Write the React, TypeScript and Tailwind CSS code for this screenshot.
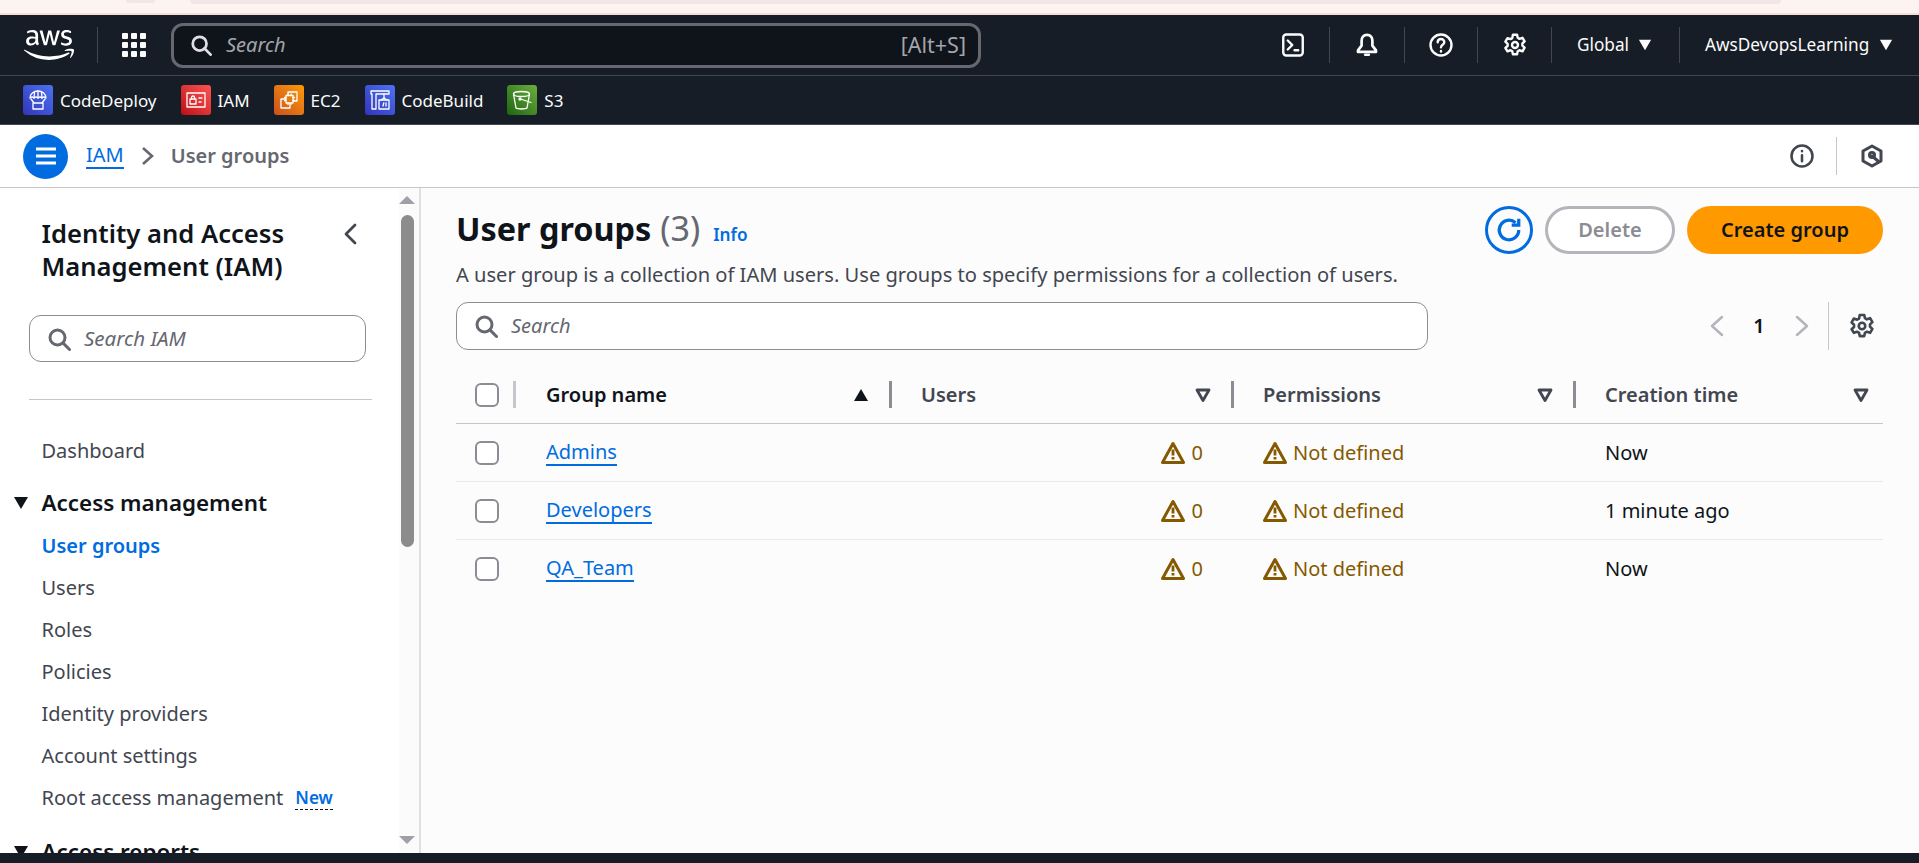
import React from "react";
import { FaAws } from "react-icons/fa";

const FONT = "font-['Noto_Sans','Open_Sans',sans-serif]";

function Icon({ size = 24, className = "", sw = 2, vb = 16, children }: { size?: number; className?: string; sw?: number; vb?: number; children: React.ReactNode }) {
  return (
    <svg width={size} height={size} viewBox={`0 0 ${vb} ${vb}`} fill="none" stroke="currentColor" strokeWidth={sw} strokeLinecap="round" strokeLinejoin="round" className={`shrink-0 ${className}`}>
      {children}
    </svg>
  );
}

const SearchIcon = ({ size = 24, className = "" }: { size?: number; className?: string }) => (
  <Icon size={size} className={className}>
    <circle cx="7" cy="7" r="5" />
    <path d="M10.6 10.6 15 15" />
  </Icon>
);

const GearIcon = ({ size = 24, className = "" }: { size?: number; className?: string }) => (
  <Icon size={size} className={className} sw={1.6}>
    <circle cx="8" cy="8" r="2" />
    <path d="M6.6 1.2h2.8l.4 2 1.2.7 2-.7 1.4 2.4-1.5 1.4v1.4l1.5 1.4-1.4 2.4-2-.7-1.2.7-.4 2H6.6l-.4-2-1.2-.7-2 .7L1.6 10l1.5-1.4V7.2L1.6 5.8 3 3.4l2 .7 1.2-.7z" />
  </Icon>
);

const WarnIcon = () => (
  <svg width="24" height="24" viewBox="0 0 24 24" fill="none" className="shrink-0">
    <path d="M12 2.5 22.5 21.5H1.5z" stroke="currentColor" strokeWidth="3" strokeLinejoin="round" />
    <path d="M12 8.500v6M12 16v2.500" stroke="currentColor" strokeWidth="2.800" />
  </svg>
);

const Tri = ({ up = false, size = 15, className = "" }: { up?: boolean; size?: number; className?: string }) => (
  <svg width={size} height={size} viewBox="0 0 16 16" className={`shrink-0 ${className}`} fill="currentColor">
    <path d={up ? "M8 2 15 14H1z" : "M1 2h14L8 14z"} />
  </svg>
);

const FilterTri = () => (
  <svg width="16" height="16" viewBox="0 0 16 16" fill="none" className="shrink-0 text-[#424650]">
    <path d="M2 3h12L8 13.500z" stroke="currentColor" strokeWidth="2.800" strokeLinejoin="round" />
  </svg>
);

function Shortcut({ label, gradient, children }: { label: string; gradient: string; children: React.ReactNode }) {
  return (
    <div className="flex items-center gap-[7px]">
      <div className={`w-[30px] h-[30px] rounded-[3px] flex items-center justify-center ${gradient}`}>
        <svg width="24" height="24" viewBox="0 0 24 24" fill="none" stroke="white" strokeWidth="1.3" strokeLinejoin="round" strokeLinecap="round">
          {children}
        </svg>
      </div>
      <span className="text-[17px] leading-none text-[#fbfbfb]">{label}</span>
    </div>
  );
}

const NavSep = ({ className = "" }: { className?: string }) => <div className={`w-px bg-[#424650] ${className}`} />;

function TopNav() {
  return (
    <div className="h-[60px] bg-[#161d26] border-b border-[#424650] flex items-center text-[#fbfbfb] box-content">
      <div className="w-[97px] flex justify-center pl-[1px] shrink-0">
        <FaAws size={50} className="text-white" />
      </div>
      <NavSep className="h-[36px]" />
      <div className="grid grid-cols-3 gap-[3px] w-[24px] ml-[24px] shrink-0">
        {Array.from({ length: 9 }).map((_, i) => (
          <div key={i} className="w-[6px] h-[6px] rounded-[1px] bg-[#fbfbfb]" />
        ))}
      </div>
      <div className="ml-[25px] w-[810px] h-[45px] rounded-[12px] border-[3px] border-[#656871] bg-[#0f141a] flex items-center pl-[16px] pr-[12px] shrink-0">
        <SearchIcon size={22} className="text-[#dedee3]" />
        <span className="ml-[14px] italic text-[20px] text-[#a4a4ad]">Search</span>
        <span className="ml-auto text-[21.5px] text-[#a4a4ad]">[Alt+S]</span>
      </div>
      <div className="ml-auto flex items-center h-full">
        <div className="w-[75px] pl-[2px] flex justify-center">
          <Icon size={24} sw={1.6}>
            <rect x="1.5" y="1" width="13" height="14" rx="2" />
            <path d="m4.5 5 3 3-3 3M9 11.5h2.5" />
          </Icon>
        </div>
        <NavSep className="h-[36px]" />
        <div className="w-[74px] flex justify-center">
          <Icon size={24} sw={1.8}>
            <path d="M8 1.2c-2.4 0-3.6 1.8-3.6 4v3.2L2 11.6v1h12v-1L11.6 8.400V5.200c0-2.200-1.200-4-3.600-4z" />
            <path d="M6.800 14.500h2.400" />
          </Icon>
        </div>
        <NavSep className="h-[36px]" />
        <div className="w-[72px] flex justify-center">
          <Icon size={24} sw={1.6}>
            <circle cx="8" cy="8" r="7" />
            <path d="M5.800 6.200C5.800 4.900 6.800 4 8 4s2.200.9 2.200 2.100c0 1.700-2.200 1.800-2.200 3.400M8 12v.4" />
          </Icon>
        </div>
        <NavSep className="h-[36px]" />
        <div className="w-[73px] flex justify-center">
          <GearIcon />
        </div>
        <NavSep className="h-[36px]" />
        <div className="w-[127px] flex items-center pl-[25px] gap-[9px] text-[17.2px]">
          <span>Global</span>
          <Tri size={14} />
        </div>
        <NavSep className="h-[36px]" />
        <div className="w-[239px] flex items-center pl-[25px] gap-[10px] text-[17.2px]">
          <span>AwsDevopsLearning</span>
          <Tri size={14} />
        </div>
      </div>
    </div>
  );
}

function ShortcutBar() {
  return (
    <div className="h-[48px] bg-[#161d26] pl-[23px] flex items-center gap-[24px] border-b border-[#424650] box-content">
      <Shortcut label="CodeDeploy" gradient="bg-linear-to-tr from-[#3334b9] to-[#4d72f3]">
        <path d="M4 10a8 7 0 0 1 16 0c-1.500-1.200-3-1.200-4 0-1.200-1.200-2.800-1.200-4 0-1.200-1.200-2.800-1.200-4 0-1-1.200-2.500-1.200-4 0z" />
        <path d="M12 3v7M8.500 4.500 8 10M15.500 4.500 16 10M5 11l3 4M19 11l-3 4" />
        <rect x="7" y="15" width="10" height="6" />
      </Shortcut>
      <Shortcut label="IAM" gradient="bg-linear-to-tr from-[#bd0816] to-[#ff5252]">
        <rect x="3" y="5" width="18" height="14" />
        <rect x="6" y="11" width="6" height="5" />
        <path d="M7.500 11V9.500a1.500 1.500 0 0 1 3 0V11M15 10h3M15 14h2" />
      </Shortcut>
      <Shortcut label="EC2" gradient="bg-linear-to-tr from-[#c8511b] to-[#ff9900]">
        <rect x="4" y="11" width="9" height="9" />
        <path d="M11 8V4h9v9h-4" />
        <rect x="9" y="7.500" width="7" height="7.500" fill="#e27a0e" />
        <path d="M11 6v1.500M14 6v1.500M11 15v1.500M14 15v1.500M7.500 9.500H9M7.500 12.500H9M16 9.500h1.500M16 12.500h1.500" />
      </Shortcut>
      <Shortcut label="CodeBuild" gradient="bg-linear-to-tr from-[#3334b9] to-[#4d72f3]">
        <path d="M3 3h18v3H8v15H4V6H3zM8 6h0" />
        <path d="M16 6v4" />
        <path d="M13 12l3-2 3 2" />
        <rect x="11" y="12" width="10" height="9" />
        <path d="M15 18l.800-3M18 18v-3" />
      </Shortcut>
      <Shortcut label="S3" gradient="bg-linear-to-tr from-[#1b660f] to-[#6cae3e]">
        <ellipse cx="11.500" cy="6" rx="8" ry="2.500" />
        <path d="M3.500 6 6 20c1.500 1.300 9.500 1.300 11 0L19.500 6" />
        <circle cx="10" cy="11" r="1" fill="white" />
        <path d="M10.500 11 21 14.500" />
      </Shortcut>
    </div>
  );
}

function Breadcrumb() {
  return (
    <div className="h-[62px] bg-white border-b border-[#c6c6cd] flex items-center pl-[23px] pr-[36px] box-content">
      <div className="w-[45px] h-[45px] rounded-full bg-[#006ce0] flex items-center justify-center shrink-0">
        <svg width="24" height="20" viewBox="0 0 24 20" fill="none" stroke="white" strokeWidth="3">
          <path d="M2 3h20M2 10h20M2 17h20" />
        </svg>
      </div>
      <span className="ml-[18px] text-[20px] text-[#006ce0] border-b-2 border-[#006ce0] leading-[24px]">IAM</span>
      <svg width="14" height="20" viewBox="0 0 14 20" fill="none" stroke="#656871" strokeWidth="2.600" className="ml-[17px]">
        <path d="m2 2 9 8-9 8" />
      </svg>
      <span className="ml-[16px] text-[20px] font-semibold text-[#656871]">User groups</span>
      <div className="ml-auto flex items-center h-[38px]">
        <Icon size={24} sw={1.700} className="text-[#424650]">
          <circle cx="8" cy="8" r="7" />
          <path d="M8 7.500v4M8 4.600v.2" />
        </Icon>
        <div className="w-px h-full bg-[#c6c6cd] ml-[22px] mr-[24px]" />
        <svg width="22" height="24" viewBox="0 0 22 24" fill="none" stroke="#424650" strokeWidth="3" strokeLinejoin="round" strokeLinecap="round">
          <path d="M11 2 20 7v10l-9 5-9-5V7z" />
          <path d="M11 12l6 5" />
          <circle cx="11" cy="11" r="2.500" />
        </svg>
      </div>
    </div>
  );
}

function SideLink({ children, className = "" }: { children: React.ReactNode; className?: string }) {
  return <div className={`h-[42px] flex items-center pl-[41.5px] text-[20px] text-[#424650] ${className}`}>{children}</div>;
}

function SideScrollbar() {
  return (
    <div className="w-[22px] bg-[#fbfbfb] border-r-2 border-[#e0e0e3] pr-[4px] flex flex-col items-center shrink-0 overflow-hidden">
      <svg width="16" height="8" viewBox="0 0 16 8" className="mt-[8px] shrink-0" fill="#a0a0a6"><path d="M8 0 16 8H0z" /></svg>
      <div className="w-[13px] h-[332px] rounded-full bg-[#8c8c8c] mt-[11px] shrink-0" />
      <svg width="16" height="8" viewBox="0 0 16 8" className="mt-auto mb-[9px] shrink-0" fill="#a0a0a6"><path d="M0 0h16L8 8z" /></svg>
    </div>
  );
}

function Sidebar() {
  return (
    <div className="w-[421px] h-full flex bg-white shrink-0 overflow-hidden">
      <div className="flex-1 min-w-0 overflow-hidden">
        <div className="flex items-start pl-[41.5px] pt-[29px] pr-[40px]">
          <div className="flex-1 text-[25.6px] leading-[33px] font-semibold text-[#0f141a]">
            Identity and Access
            <br />
            Management (IAM)
          </div>
          <svg width="16" height="22" viewBox="0 0 16 22" fill="none" stroke="#424650" strokeWidth="2.800" strokeLinecap="round" strokeLinejoin="round" className="mt-[6px]">
            <path d="M12 2 3 11l9 9" />
          </svg>
        </div>
        <div className="ml-[29px] mt-[32px] w-[337px] h-[47px] rounded-[12px] border border-[#8c8c94] flex items-center pl-[17px]">
          <SearchIcon size={24} className="text-[#656871]" />
          <span className="ml-[13px] italic text-[20.5px] text-[#656871]">Search IAM</span>
        </div>
        <div className="ml-[29px] mt-[37px] w-[343px] h-px bg-[#c6c6cd]" />
        <SideLink className="mt-[30px]">Dashboard</SideLink>
        <div className="h-[42px] mt-[10px] flex items-center pl-[13px] gap-[12.5px] text-[#0f141a]">
          <Tri size={16} />
          <span className="text-[22.400px] font-semibold">Access management</span>
        </div>
        <SideLink className="mt-[1px] font-semibold !text-[#006ce0]">User groups</SideLink>
        <SideLink>Users</SideLink>
        <SideLink>Roles</SideLink>
        <SideLink>Policies</SideLink>
        <SideLink>Identity providers</SideLink>
        <SideLink>Account settings</SideLink>
        <SideLink>
          Root access management
          <span className="ml-[12px] text-[17.2px] font-semibold text-[#006ce0] border-b border-dashed border-[#0f141a] leading-[22px]">New</span>
        </SideLink>
        <div className="h-[42px] mt-[12px] flex items-center pl-[13px] gap-[12.5px] text-[#0f141a]">
          <Tri size={16} />
          <span className="text-[22.400px] font-semibold">Access reports</span>
        </div>
      </div>
      <SideScrollbar />
    </div>
  );
}

const COLS = "grid grid-cols-[58px_375px_342px_342px_310px]";

function HeadCell({ label, sep, sorted, dark, last }: { label: string; sep: string; sorted?: boolean; dark?: boolean; last?: boolean }) {
  return (
    <div className="h-[27px] flex items-center">
      <div className={`w-[3px] h-[27px] ${sep} shrink-0`} />
      <div className={`flex-1 flex items-center justify-between pl-[29px] ${last ? "pr-[14px]" : "pr-[20px]"}`}>
        <span className={`text-[20px] font-semibold ${dark ? "text-[#0f141a]" : "text-[#424650]"}`}>{label}</span>
        {sorted ? <Tri up size={16} className="text-[#0f141a]" /> : <FilterTri />}
      </div>
    </div>
  );
}

const Check = () => <div className="ml-[19px] w-[24px] h-[24px] shrink-0 rounded-[6px] border-2 border-[#8c8c94] bg-white" />;

function Row({ name, time, last }: { name: string; time: string; last?: boolean }) {
  return (
    <div className={`${COLS} h-[58px] items-center ${last ? "" : "border-b border-[#e8e8ed]"}`}>
      <Check />
      <div className="pl-[32px]">
        <span className="text-[20px] text-[#006ce0] border-b-2 border-[#006ce0] leading-[24px] inline-block">{name}</span>
      </div>
      <div className="flex items-center justify-end gap-[7px] pr-[28px] text-[20px] text-[#855900]">
        <WarnIcon />
        <span>0</span>
      </div>
      <div className="flex items-center gap-[6px] pl-[32px] text-[20px] text-[#855900]">
        <WarnIcon />
        <span>Not defined</span>
      </div>
      <div className="pl-[32px] text-[20px] text-[#0f141a]">{time}</div>
    </div>
  );
}

function Main() {
  return (
    <div className="flex-1 min-w-0 bg-[#fcfcfc] pl-[35px] pr-[36px]">
      <div className="flex items-start pt-[17px] h-[73px]">
        <div className="flex items-baseline">
          <span className="text-[32.4px] leading-[46px] font-bold text-[#0f141a]">User groups</span>
          <span className="ml-[9px] text-[34px] leading-[46px] text-[#656871]">(3)</span>
          <span className="ml-[13px] text-[17.2px] font-semibold text-[#006ce0]">Info</span>
        </div>
        <div className="ml-auto mt-[1px] flex items-center">
          <div className="w-[48px] h-[48px] rounded-full border-[3px] border-[#006ce0] flex items-center justify-center text-[#006ce0]">
            <svg width="26" height="26" viewBox="0 0 24 24" fill="none" stroke="currentColor" strokeWidth="3">
              <path d="M21 12a9 9 0 1 1-3-6.700" />
              <path d="M21 1.500V7.500h-6.500" />
            </svg>
          </div>
          <div className="ml-[12px] w-[130px] h-[48px] rounded-full border-[3px] border-[#b4b4bb] bg-white flex items-center justify-center text-[20px] font-semibold text-[#8c8c94]">Delete</div>
          <div className="ml-[12px] w-[196px] h-[48px] rounded-full bg-[#ff9900] flex items-center justify-center text-[20px] font-semibold text-[#0f141a]">Create group</div>
        </div>
      </div>
      <div className="h-[28px] flex items-center text-[20.1px] text-[#424650]">A user group is a collection of IAM users. Use groups to specify permissions for a collection of users.</div>
      <div className="mt-[13px] flex items-center h-[48px]">
        <div className="w-[972px] h-[48px] rounded-[12px] border border-[#8c8c94] bg-white flex items-center pl-[17px]">
          <SearchIcon size={24} className="text-[#656871]" />
          <span className="ml-[13px] italic text-[20px] text-[#656871]">Search</span>
        </div>
        <div className="ml-[281px] flex items-center text-[#b4b4bb]">
          <svg width="16" height="22" viewBox="0 0 16 22" fill="none" stroke="currentColor" strokeWidth="2.500" strokeLinecap="round" strokeLinejoin="round"><path d="M13 2 3 11l10 9" /></svg>
          <span className="w-[26px] ml-[21px] text-center text-[20px] font-semibold text-[#0f141a]">1</span>
          <svg width="16" height="22" viewBox="0 0 16 22" fill="none" stroke="currentColor" strokeWidth="2.500" strokeLinecap="round" strokeLinejoin="round" className="ml-[22px]"><path d="m3 2 10 9-10 9" /></svg>
        </div>
        <div className="ml-[18px] w-px h-[48px] bg-[#c6c6cd]" />
        <GearIcon size={26} className="ml-[20px] text-[#424650]" />
      </div>
      <div className={`${COLS} mt-[31px] pb-[15px] border-b border-[#c6c6cd] items-center`}>
        <div className="flex items-center">
          <Check />
          <div className="ml-[14px] w-[3px] h-[27px] shrink-0 bg-[#c6c6cd]" />
        </div>
        <HeadCell label="Group name" sep="bg-transparent" sorted dark />
        <HeadCell label="Users" sep="bg-[#8c8c94]" />
        <HeadCell label="Permissions" sep="bg-[#8c8c94]" />
        <HeadCell label="Creation time" sep="bg-[#8c8c94]" last />
      </div>
      <Row name="Admins" time="Now" />
      <Row name="Developers" time="1 minute ago" />
      <Row name="QA_Team" time="Now" last />
    </div>
  );
}

export default function App() {
  return (
    <div className={`${FONT} w-[1919px] h-[863px] overflow-hidden flex flex-col bg-white`}>
      <div className="h-[15px] shrink-0 bg-[#fdf4f2] border-b-2 border-[#f8dedb] flex">
        <div className="h-[3px] ml-[126px] w-[29px] rounded-b-full bg-[#f3e6e6]" />
        <div className="h-[4px] ml-[35px] w-[1591px] rounded-b-[10px] bg-[#f3e6e6]" />
      </div>
      <TopNav />
      <ShortcutBar />
      <Breadcrumb />
      <div className="flex-1 min-h-0 flex">
        <Sidebar />
        <Main />
      </div>
      <div className="h-[10px] bg-[#161d26] shrink-0" />
    </div>
  );
}
